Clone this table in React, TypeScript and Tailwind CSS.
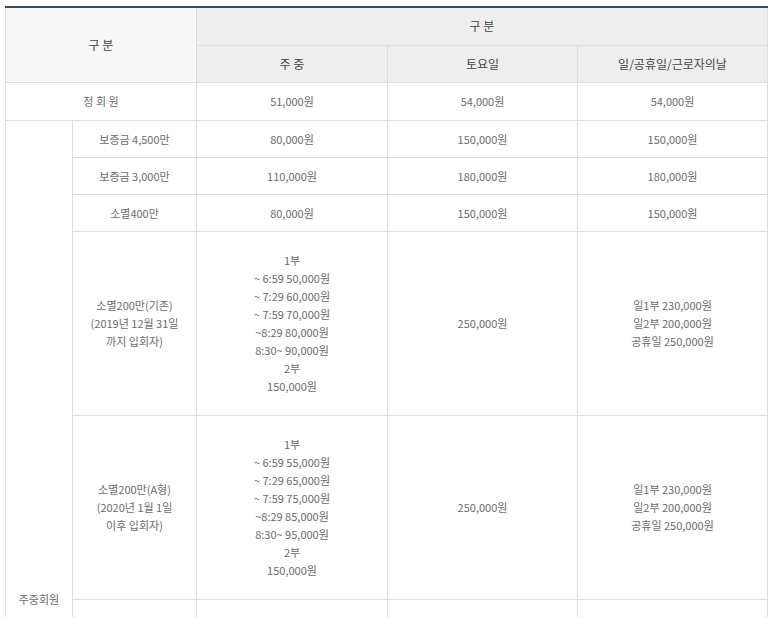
import React from "react";

type Row = {
  label: string[];
  weekday: string[];
  saturday: string;
  holiday: string[];
  tall?: boolean;
};

const rows: Row[] = [
  { label: ["보증금 4,500만"], weekday: ["80,000원"], saturday: "150,000원", holiday: ["150,000원"] },
  { label: ["보증금 3,000만"], weekday: ["110,000원"], saturday: "180,000원", holiday: ["180,000원"] },
  { label: ["소멸400만"], weekday: ["80,000원"], saturday: "150,000원", holiday: ["150,000원"] },
  {
    label: ["소멸200만(기존)", "(2019년 12월 31일", "까지 입회자)"],
    weekday: ["1부", "~ 6:59 50,000원", "~ 7:29 60,000원", "~ 7:59 70,000원", "~8:29 80,000원", "8:30~ 90,000원", "2부", "150,000원"],
    saturday: "250,000원",
    holiday: ["일1부 230,000원", "일2부 200,000원", "공휴일 250,000원"],
    tall: true,
  },
  {
    label: ["소멸200만(A형)", "(2020년 1월 1일", "이후 입회자)"],
    weekday: ["1부", "~ 6:59 55,000원", "~ 7:29 65,000원", "~ 7:59 75,000원", "~8:29 85,000원", "8:30~ 95,000원", "2부", "150,000원"],
    saturday: "250,000원",
    holiday: ["일1부 230,000원", "일2부 200,000원", "공휴일 250,000원"],
    tall: true,
  },
  {
    label: ["소멸200만(B형)", "(2020년 1월 1일", "이후 입회자)"],
    weekday: ["1부", "~ 6:59 60,000원", "~ 7:29 70,000원", "~ 7:59 80,000원", "~8:29 90,000원", "8:30~ 100,000원", "2부", "150,000원"],
    saturday: "250,000원",
    holiday: ["일1부 230,000원", "일2부 200,000원", "공휴일 250,000원"],
    tall: true,
  },
  {
    label: ["소멸200만(C형)", "(2020년 1월 1일", "이후 입회자)"],
    weekday: ["1부", "~ 6:59 65,000원", "~ 7:29 75,000원", "~ 7:59 85,000원", "~8:29 95,000원", "8:30~ 105,000원", "2부", "150,000원"],
    saturday: "250,000원",
    holiday: ["일1부 230,000원", "일2부 200,000원", "공휴일 250,000원"],
    tall: true,
  },
  { label: ["소멸100만"], weekday: ["90,000원"], saturday: "160,000원", holiday: ["160,000원"] },
  { label: ["가족회원"], weekday: ["85,000원"], saturday: "155,000원", holiday: ["155,000원"] },
  { label: ["주중무기명"], weekday: ["95,000원"], saturday: "170,000원", holiday: ["170,000원"] },
];

function Lines({ items }: { items: string[] }) {
  return (
    <>
      {items.map((t, i) => (
        <div key={i}>{t}</div>
      ))}
    </>
  );
}

export default function App() {
  const td = "border border-[#dddddd] text-center align-middle";
  const th = "border border-[#dddddd] text-center align-middle font-normal text-[12px] text-[#444444]";

  return (
    <div
      className="bg-white pt-[6px] pl-[5px] pb-8"
      style={{ fontFamily: '"Noto Sans CJK KR", "Noto Sans", sans-serif' }}
    >
      <table className="w-[762px] border-collapse table-fixed border-t-2 border-t-[#3b4a5d] text-[11px] leading-[18px] text-[#6b6b6b]">
        <colgroup>
          <col className="w-[67px]" />
          <col className="w-[124px]" />
          <col className="w-[191px]" />
          <col className="w-[190px]" />
          <col className="w-[190px]" />
        </colgroup>
        <thead>
          <tr className="h-[38px]">
            <th colSpan={2} rowSpan={2} className={`${th} bg-[#f7f7f7] border-t-0`}>
              구 분
            </th>
            <th colSpan={3} className={`${th} bg-[#eeeeee] border-t-0`}>
              구 분
            </th>
          </tr>
          <tr className="h-[37px]">
            <th className={`${th} bg-[#eeeeee]`}>주 중</th>
            <th className={`${th} bg-[#eeeeee]`}>토요일</th>
            <th className={`${th} bg-[#eeeeee]`}>일/공휴일/근로자의날</th>
          </tr>
        </thead>
        <tbody>
          <tr className="h-[38px]">
            <td colSpan={2} className={td}>
              정 회 원
            </td>
            <td className={td}>51,000원</td>
            <td className={td}>54,000원</td>
            <td className={td}>54,000원</td>
          </tr>
          {rows.map((r, i) => (
            <tr key={i} className={r.tall ? "h-[184px]" : "h-[37px]"}>
              {i === 0 && (
                <td rowSpan={rows.length} className={td}>
                  주중회원
                </td>
              )}
              <td className={td}>
                <Lines items={r.label} />
              </td>
              <td className={td}>
                <Lines items={r.weekday} />
              </td>
              <td className={td}>{r.saturday}</td>
              <td className={td}>
                <Lines items={r.holiday} />
              </td>
            </tr>
          ))}
        </tbody>
      </table>
    </div>
  );
}
